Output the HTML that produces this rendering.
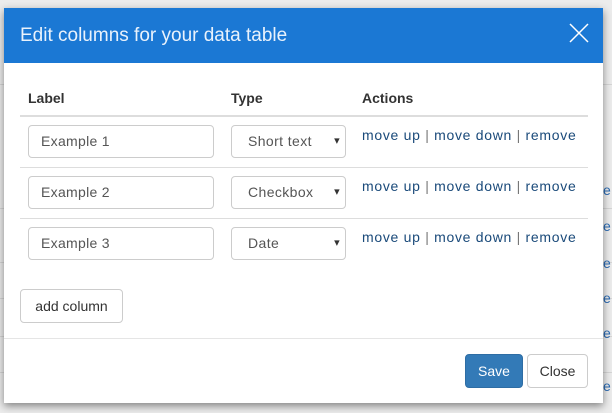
<!DOCTYPE html>
<html><head><style>
body{margin:0;width:612px;height:413px;background:#ececec;font-family:"Liberation Sans",sans-serif;position:relative;overflow:hidden}
.bgline{position:absolute;left:0;right:0;height:1px;background:#d6d6d6}
.frag{position:absolute;font-size:14px;color:#2a6ab3}
.modal{position:absolute;left:4px;top:8px;width:599px;height:395px;background:#fff;box-shadow:0 3px 8px rgba(0,0,0,.45)}
.hd{height:55px;background:#1b78d4;color:#e9f2fc;font-size:19px;line-height:55px;padding-left:16px;position:relative}
.x{position:absolute;right:14px;top:15px}
.abs{position:absolute}
.th{font-weight:bold;font-size:14px;color:#333;top:82px}
.line{position:absolute;left:16px;width:568px;height:2px;background:#ddd}
.inp{position:absolute;left:24px;height:31px;border:1px solid #ccc;border-radius:4px;font-size:14px;color:#555;line-height:31px;padding-left:12px;width:172px;letter-spacing:0.3px}
.sel{position:absolute;left:227px;height:31px;border:1px solid #ccc;border-radius:4px;font-size:14px;color:#555;line-height:31px;padding-left:16px;width:97px;letter-spacing:0.4px}
.sel:after{content:"▾";position:absolute;right:5px;top:0;font-size:11px;color:#333}
.act{position:absolute;left:358px;font-size:14px;color:#1a4a7a;letter-spacing:0.7px}
.act span{color:#777}
.btn{position:absolute;border:1px solid #ccc;border-radius:4px;font-size:14px;color:#333;text-align:center;box-sizing:border-box}
</style></head><body>
<div class="bgline" style="top:84px"></div>
<div class="bgline" style="top:208px"></div>
<div class="bgline" style="top:262px"></div>
<div class="bgline" style="top:298px"></div>
<div class="bgline" style="top:336px"></div>
<div class="bgline" style="top:372px"></div>
<div class="frag" style="left:603px;top:182px">e</div>
<div class="frag" style="left:603px;top:218px">e</div>
<div class="frag" style="left:603px;top:255px">e</div>
<div class="frag" style="left:603px;top:290px">e</div>
<div class="frag" style="left:603px;top:325px">e</div>
<div class="frag" style="left:603px;top:378px">e</div>
<div class="modal">
<div class="hd">Edit columns for your data table
<svg class="x" width="20" height="20" viewBox="0 0 20 20"><path d="M1 1L19 19M19 1L1 19" stroke="#fff" stroke-width="1.5"/></svg></div>
<div class="abs th" style="left:24px">Label</div>
<div class="abs th" style="left:227px">Type</div>
<div class="abs th" style="left:358px">Actions</div>
<div class="line" style="top:107px"></div>
<div class="inp" style="top:117px">Example 1</div>
<div class="sel" style="top:117px">Short text</div>
<div class="act" style="top:119px">move up <span>|</span> move down <span>|</span> remove</div>
<div class="line" style="top:159px;height:1px"></div>
<div class="inp" style="top:168px">Example 2</div>
<div class="sel" style="top:168px">Checkbox</div>
<div class="act" style="top:170px">move up <span>|</span> move down <span>|</span> remove</div>
<div class="line" style="top:210px;height:1px"></div>
<div class="inp" style="top:219px">Example 3</div>
<div class="sel" style="top:219px">Date</div>
<div class="act" style="top:221px">move up <span>|</span> move down <span>|</span> remove</div>
<div class="btn" style="left:16px;top:281px;width:103px;height:34px;line-height:32px">add column</div>
<div style="position:absolute;left:0;right:0;top:330px;height:1px;background:#e5e5e5"></div>
<div class="btn" style="left:461px;top:346px;width:58px;height:34px;line-height:32px;background:#337ab7;border-color:#2e6da4;color:#fff">Save</div>
<div class="btn" style="left:523px;top:346px;width:61px;height:34px;line-height:32px">Close</div>
</div>
</body></html>
